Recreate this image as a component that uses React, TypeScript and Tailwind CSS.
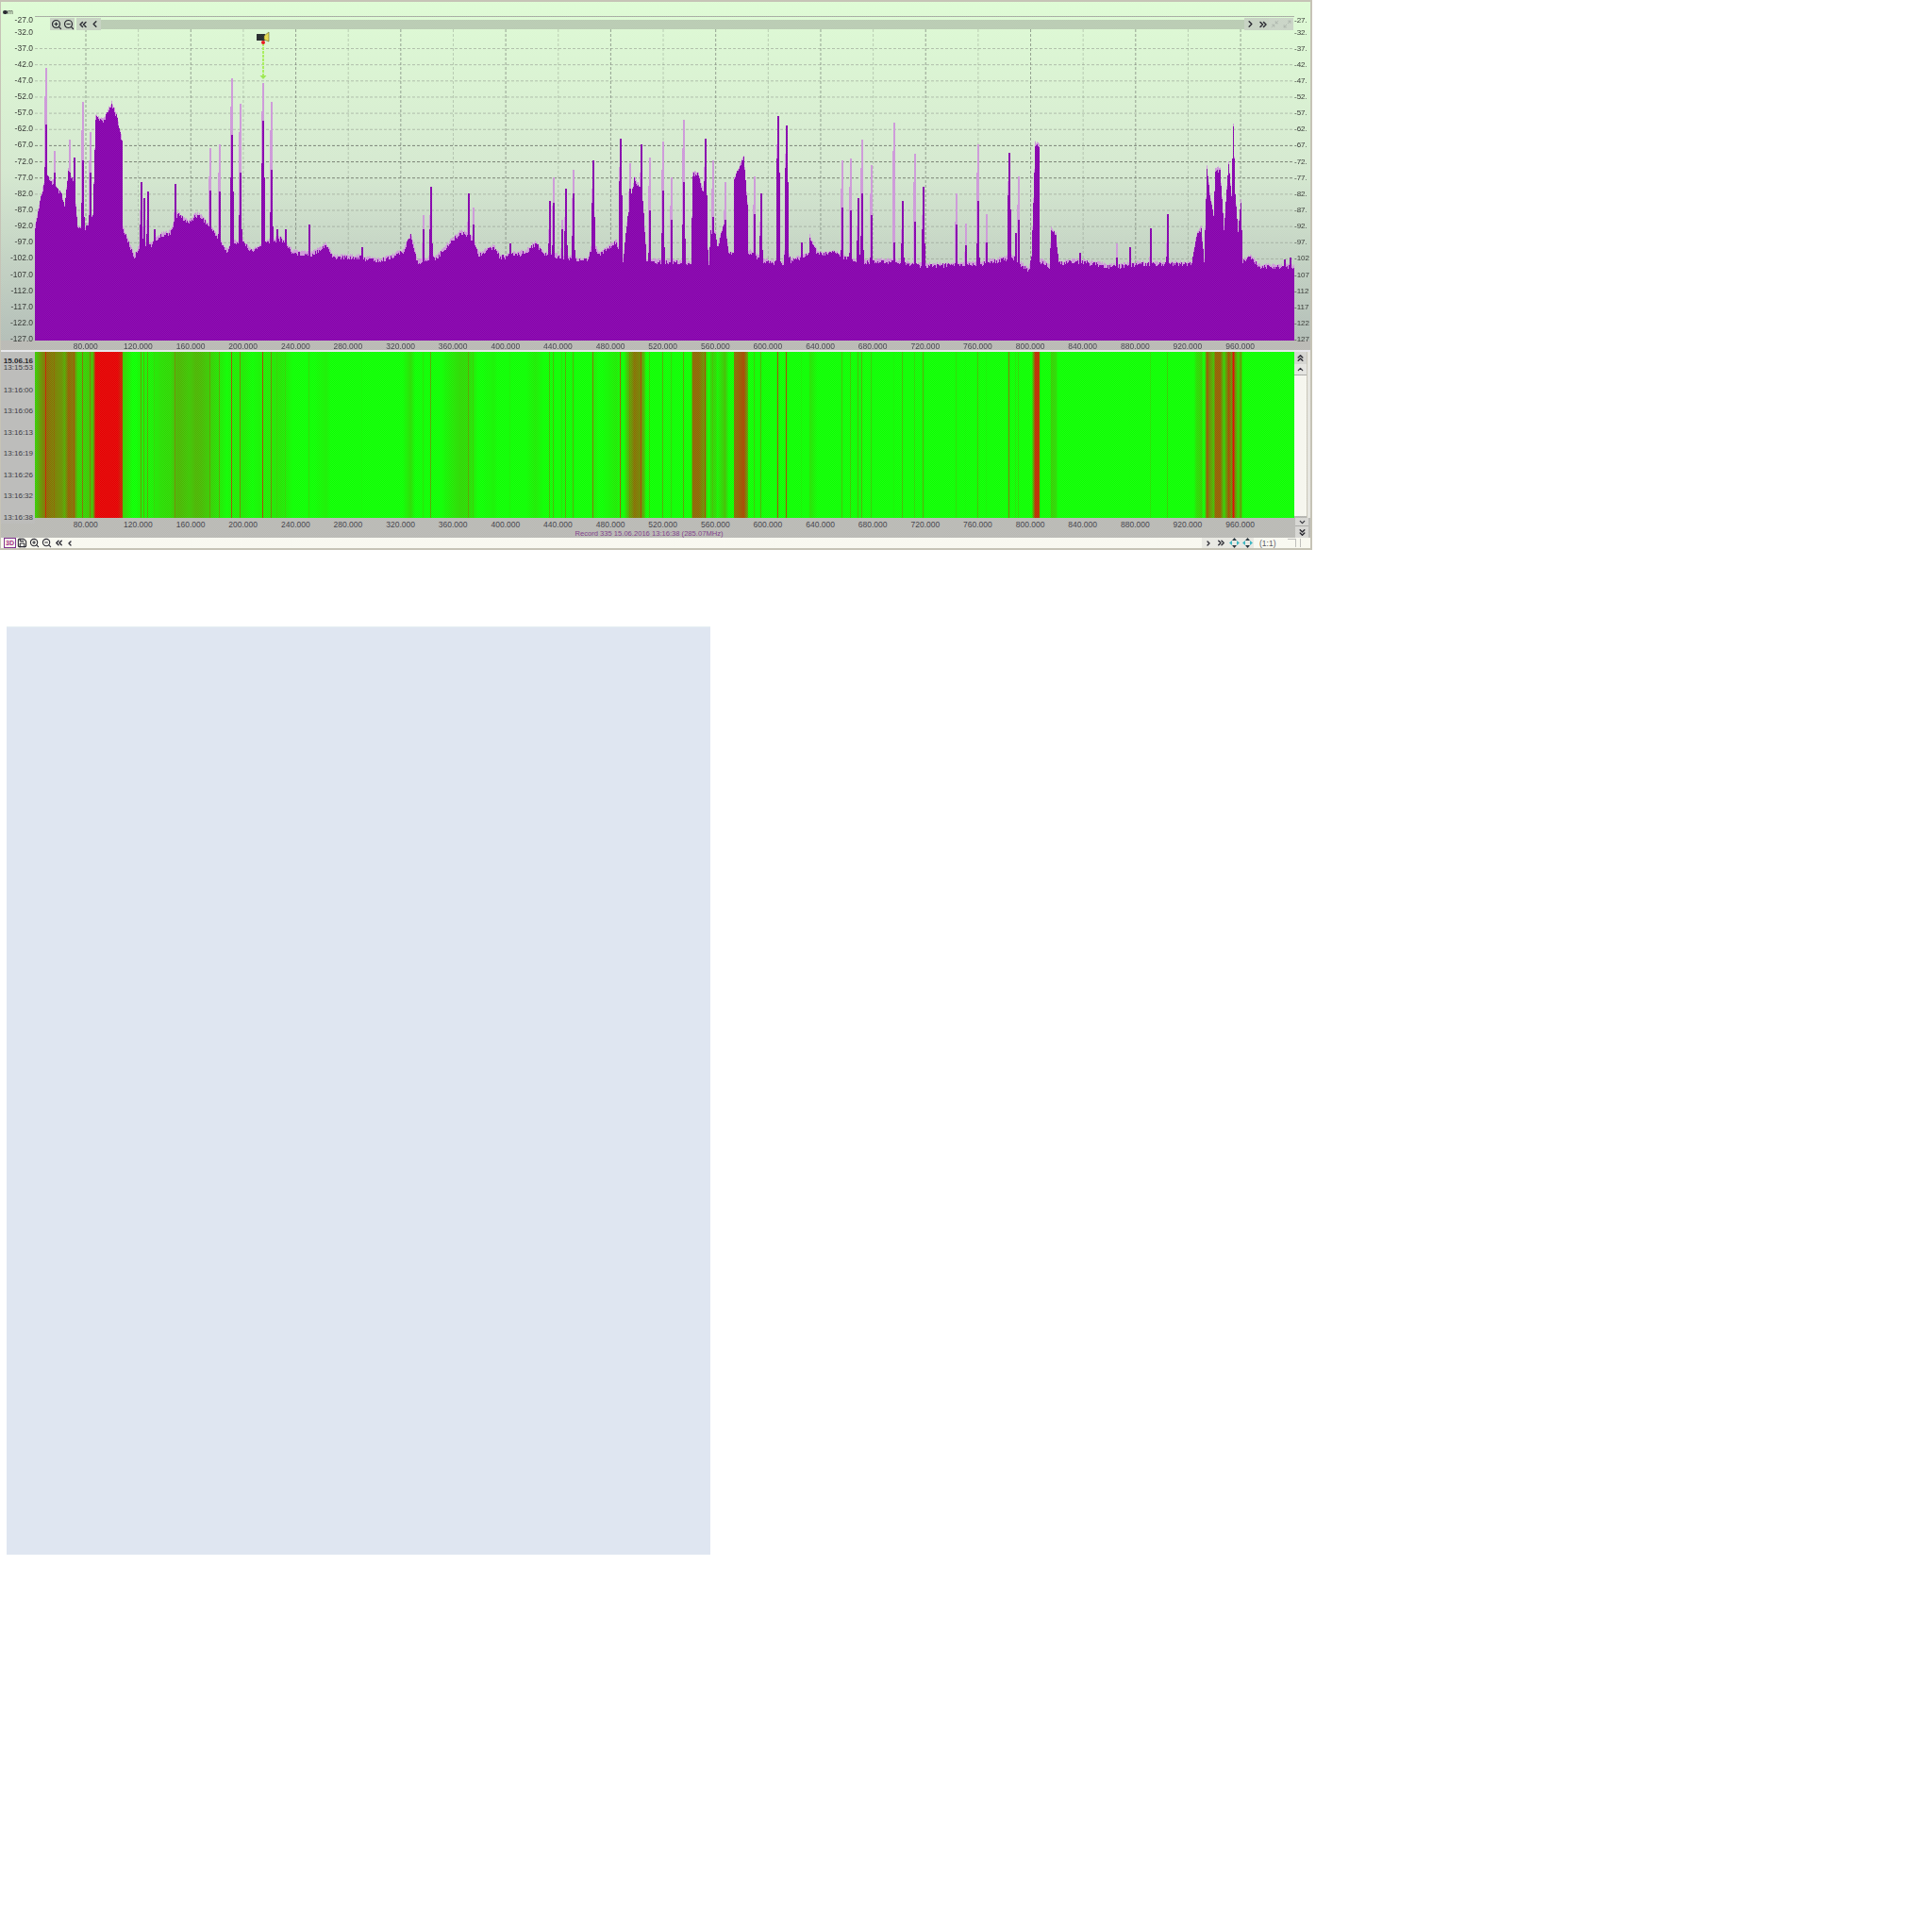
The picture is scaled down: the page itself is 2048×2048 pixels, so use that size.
import React from 'react';
import { ZoomIn, ZoomOut, ChevronsLeft, ChevronLeft, ChevronRight, ChevronsRight, ChevronsUp, ChevronUp, ChevronDown, ChevronsDown, Save, Maximize2, Minimize2 } from 'lucide-react';

// envelope of the noise floor, page coordinates [x, y]
const ENVELOPE: number[][] = [
  [37, 240], [42, 213], [47, 193], [50, 187], [57, 197], [65, 207], [68, 220], [72, 183], [78, 193], [82, 243], [90, 242], [98, 230],
  [101, 125], [110, 128], [118, 110], [123, 123], [129, 150], [130, 243], [142, 273], [147, 262], [160, 260], [170, 250], [180, 247],
  [188, 227], [200, 237], [207, 228], [213, 230], [227, 247], [240, 267], [247, 258], [257, 257], [267, 267], [280, 258], [297, 253],
  [310, 268], [330, 270], [345, 260], [353, 273], [380, 273], [403, 277], [427, 267], [435, 250], [442, 278], [463, 273], [477, 257],
  [488, 247], [498, 250], [507, 270], [523, 262], [530, 273], [557, 268], [567, 258], [577, 270], [623, 277], [628, 257], [635, 270],
  [653, 257], [660, 277], [665, 230], [672, 190], [678, 200], [682, 227], [685, 277], [713, 278], [732, 280], [734, 185], [740, 185],
  [746, 208], [751, 280], [753, 245], [758, 247], [760, 263], [768, 235], [772, 268], [777, 270], [778, 190], [788, 168], [792, 217],
  [793, 267], [810, 277], [830, 280], [832, 258], [838, 277], [857, 270], [858, 252], [867, 270], [883, 268], [907, 278], [943, 277],
  [977, 282], [1040, 280], [1073, 273], [1090, 287], [1093, 273], [1097, 153], [1101, 155], [1102, 277], [1112, 282], [1114, 242],
  [1119, 250], [1122, 280], [1140, 277], [1180, 283], [1207, 280], [1263, 280], [1268, 250], [1273, 242], [1276, 277], [1279, 177],
  [1282, 207], [1286, 230], [1288, 180], [1293, 180], [1297, 243], [1302, 173], [1305, 207], [1307, 132], [1309, 207], [1312, 247],
  [1315, 213], [1317, 277], [1325, 273], [1335, 283], [1372, 283],
];

// narrow carriers [x, solid top, pale top]
const SPIKES: number[][] = [
  [48, 132, 72], [57, 183, 160], [73, 183, 148], [78, 167, 167], [87, 170, 108], [95, 183, 140], [149, 193, 193], [152, 210, 210],
  [156, 203, 203], [163, 243, 243], [185, 195, 195], [222, 202, 157], [232, 203, 153], [245, 143, 83], [254, 183, 110], [278, 128, 88],
  [287, 180, 108], [293, 243, 243], [302, 243, 243], [327, 238, 238], [383, 262, 262], [448, 243, 228], [456, 198, 198], [496, 205, 205],
  [501, 238, 220], [540, 258, 258], [582, 213, 213], [586, 215, 188], [595, 243, 233], [599, 200, 200], [607, 205, 180], [628, 170, 170],
  [657, 147, 147], [667, 200, 173], [679, 153, 153], [688, 223, 167], [702, 202, 150], [711, 233, 188], [724, 193, 127], [747, 147, 147],
  [755, 230, 170], [768, 233, 193], [799, 227, 187], [806, 205, 205], [824, 123, 123], [833, 133, 133], [849, 257, 257], [892, 220, 170],
  [901, 223, 168], [909, 210, 210], [913, 205, 148], [923, 228, 175], [947, 257, 130], [956, 213, 213], [969, 235, 163], [978, 198, 198],
  [1013, 238, 205], [1023, 260, 237], [1036, 213, 153], [1045, 257, 227], [1069, 162, 162], [1076, 247, 247], [1079, 233, 187],
  [1144, 268, 268], [1183, 273, 258], [1197, 262, 262], [1219, 242, 242], [1237, 227, 227], [1361, 275, 275], [1367, 273, 273],
];

const X0 = 37;
const X1 = 1372;

function rnd(x: number) {
  const v = Math.sin(x * 12.9898) * 43758.5453;
  return v - Math.floor(v);
}

function buildColumns() {
  const solid: number[] = [];
  const pale: number[] = [];
  const clean: number[] = [];
  let k = 0;
  for (let x = X0; x < X1; x++) {
    while (k < ENVELOPE.length - 2 && ENVELOPE[k + 1][0] <= x) k++;
    const [ax, ay] = ENVELOPE[k];
    const [bx, by] = ENVELOPE[k + 1];
    const y = ay + ((by - ay) * (x - ax)) / (bx - ax);
    clean.push(y);
    solid.push(y + (rnd(x) - 0.5) * 5);
    pale.push(y - 1 - rnd(x + 7) * 3);
  }
  for (const [x, top, hold] of SPIKES) {
    const i = x - X0;
    for (const j of [i, i + 1]) {
      solid[j] = Math.min(solid[j], top);
      pale[j] = Math.min(pale[j], hold);
    }
    // carriers only tint the waterfall, one column wide
    clean[i] = Math.min(clean[i], clean[i] + (top - clean[i]) * 0.72);
    solid[i - 1] = Math.min(solid[i - 1], top + 45);
    solid[i + 2] = Math.min(solid[i + 2], top + 60);
    pale[i - 1] = Math.min(pale[i - 1], hold + 30);
  }
  return { solid, pale, clean };
}

const { solid, pale, clean } = buildColumns();

function stepPath(col: number[]) {
  let d = `M${X0} 361`;
  col.forEach((y, i) => {
    d += `V${y.toFixed(1)}H${X0 + i + 1}`;
  });
  return d + 'V361Z';
}

function heat(y: number) {
  const t = Math.max(0, Math.min(1, (268 - y) / 140));
  const r = Math.round(12 + 216 * t);
  const g = Math.round(255 * (1 - t));
  return `rgb(${r},${g},0)`;
}

const DB = Array.from({ length: 21 }, (_, i) => -27 - i * 5);
const FREQS = Array.from({ length: 23 }, (_, i) => 80 + i * 40);
const TIMES = ['13:16:00', '13:16:06', '13:16:13', '13:16:19', '13:16:26', '13:16:32', '13:16:38'];

const FreqAxis = () => (
  <div className="flex pl-[62px] h-[10px] items-center">
    {FREQS.map((f) => (
      <span key={f} className="w-[55.64px] shrink-0 text-center text-[8.5px] leading-[10px] text-[#3e3e48]">
        {f}.000
      </span>
    ))}
  </div>
);

const ToolBtn = ({ children, faded }: { children: React.ReactNode; faded?: boolean }) => (
  <div className={`w-[13px] h-[13px] flex items-center justify-center ${faded ? 'bg-[#c9d4c6] text-[#a5aea5]' : 'bg-[#c6d2c2] text-[#23232b]'}`}>
    {children}
  </div>
);

const FitIcon = () => (
  <svg width="11" height="11" viewBox="0 0 11 11">
    <path d="M5.500 0l2.500 3h-5zM5.500 11l2.500-3h-5z" fill="#23323a" />
    <path d="M0 5.500l3-2.500v5zM11 5.500l-3-2.500v5z" fill="#35b4c0" />
  </svg>
);

const Spectrum = () => (
  <svg className="block w-[1335px] h-[359px] shrink-0" viewBox="37 2 1335 359">
    {Array.from({ length: 20 }, (_, i) => (
      <line key={i} x1={37} x2={1372} y1={51.5 + i * 17.15} y2={51.5 + i * 17.15} stroke={i > 5 && i < 9 ? '#6e7468' : '#8b9186'} strokeOpacity={i > 5 && i < 9 ? 0.9 : 0.55} strokeDasharray="3 2" />
    ))}
    {FREQS.map((f, i) => (
      <line key={f} x1={91 + i * 55.64} x2={91 + i * 55.64} y1={31} y2={361} stroke="#727a70" strokeOpacity={i % 2 ? 0.35 : 0.7} strokeDasharray="3 2" />
    ))}
    <path d={stepPath(pale)} fill="#cd98d8" />
    <path d={stepPath(solid)} fill="#8600ac" shapeRendering="crispEdges" />
    {/* marker */}
    <line x1={279} x2={279} y1={46} y2={82} stroke="#a6ee5a" strokeWidth={2} strokeDasharray="3 1" />
    <path d="M275.500 80h7l-3.500 4z" fill="#9ae84e" />
    <rect x={272} y={36} width={9} height={7} fill="#23282a" />
    <path d="M280 38l5-4v10l-5-2z" fill="#e4d84a" stroke="#5b5a20" strokeWidth={0.6} />
    <circle cx={279} cy={45} r={2} fill="#e8141c" />
  </svg>
);

const Waterfall = () => (
  <svg className="block w-[1335px] h-[176px] shrink-0" viewBox="37 0 1335 176" shapeRendering="crispEdges">
    {clean.map((y, i) => (
      <rect key={i} x={X0 + i} y={0} width={1} height={176} fill={heat(y)} />
    ))}
  </svg>
);

export default function App() {
  return (
    <div className="min-h-screen bg-white [font-family:'Liberation_Sans',Arial,sans-serif]">
      <div className="relative w-[1391px] h-[583px] flex flex-col border-t-2 border-l border-r-2 border-b-2 border-[#c6c3b6] blur-[0.35px]">
        {/* top panel with level axis */}
        <div className="relative flex h-[359px] bg-linear-to-b from-[#defbd4] via-[#d4e8cf] to-[#b2bdb6]">
          <div className="w-[36px] shrink-0 pt-[10.5px] pr-[2px] text-right text-[8.5px] leading-[17.15px] text-[#30332f]">
            {DB.map((v, i) => (
              <div key={v} className={i === 0 ? 'h-[17.15px] -mb-[4.15px]' : 'h-[17.15px]'}>
                {v}.0
              </div>
            ))}
          </div>
          <Spectrum />
          <div className="w-[17px] shrink-0 pt-[10.5px] text-[8px] leading-[17.15px] text-[#30332f]">
            {DB.map((v, i) => (
              <div key={v} className={i === 0 ? 'h-[17.15px] -mb-[4.15px] whitespace-nowrap' : 'h-[17.15px] whitespace-nowrap'}>
                {v > -100 ? `${v}.` : v}
              </div>
            ))}
          </div>
          {/* unit mark */}
          <div className="absolute left-[2px] top-[7px] flex items-center text-[7px] leading-[8px] text-[#2c2c2c]">
            <span className="w-[5px] h-[4px] bg-[#23232b] rounded-sm" />m
          </div>
          {/* frame and zoom bar over the plot */}
          <div className="absolute left-[36px] top-[15px] w-[1335px] h-[1px] bg-[#a6aca2]" />
          <div className="absolute left-[52px] top-[17px] flex items-center h-[13px]">
            <ToolBtn><ZoomIn size={12} strokeWidth={2.4} /></ToolBtn>
            <ToolBtn><ZoomOut size={12} strokeWidth={2.4} /></ToolBtn>
            <div className="w-[2px]" />
            <ToolBtn><ChevronsLeft size={12} strokeWidth={3} /></ToolBtn>
            <ToolBtn><ChevronLeft size={11} strokeWidth={3} /></ToolBtn>
            <div className="w-[1212px] h-[10px] bg-[#b9cbb2]" />
            <ToolBtn><ChevronRight size={11} strokeWidth={3} /></ToolBtn>
            <ToolBtn><ChevronsRight size={12} strokeWidth={3} /></ToolBtn>
            <ToolBtn faded><Minimize2 size={9} /></ToolBtn>
            <ToolBtn faded><Maximize2 size={9} /></ToolBtn>
          </div>
        </div>

        {/* frequency axis under spectrum */}
        <div className="bg-[#b9b9b4] h-[10px] pt-[1px]">
          <FreqAxis />
        </div>
        <div className="h-[2px] bg-[#e6e6ea]" />

        {/* waterfall row */}
        <div className="flex h-[176px]">
          <div className="relative z-10 w-[36px] shrink-0 h-[182px] bg-[#bdbdbb] text-right pr-[2px] text-[8px] leading-[9px] text-[#3c3c44]">
            <div className="pt-[5px] font-bold text-[#26262c]">15.06.16</div>
            <div className="-mt-[2px] h-[17.5px]">13:15:53</div>
            <div className="flex flex-col">
              {TIMES.map((t) => (
                <div key={t} className="h-[22.5px] leading-[22.5px]">{t}</div>
              ))}
            </div>
          </div>
          <Waterfall />
          <div className="w-[14px] shrink-0 flex flex-col bg-[#f6f6ee] border-r border-[#c6c3b6] text-[#23232b]">
            <div className="h-[13px] flex items-center justify-center bg-[#d4d4d0]"><ChevronsUp size={11} strokeWidth={3.2} /></div>
            <div className="h-[12px] flex items-center justify-center bg-[#e4e4e0] border-b border-[#a8a8a4]"><ChevronUp size={9} strokeWidth={3} /></div>
            <div className="flex-1" />
            <div className="h-[2px] bg-[#b5b5b0]" />
          </div>
          <div className="w-[3px] shrink-0 bg-[#e6e6e0]" />
        </div>

        {/* lower axis with record line */}
        <div className="relative h-[21px] bg-[#b9b9b4]">
          <div className="pt-[2px]">
            <FreqAxis />
          </div>
          <div className="text-center w-[1374px] text-[7.600px] leading-[9px] text-[#7c3a88]">
            Record 335 15.06.2016 13:16:38 (285.07MHz)
          </div>
          <div className="absolute left-[1372px] top-0 w-[14px] flex flex-col text-[#23232b] bg-[#d6d6d2]">
            <div className="h-[8px] flex items-center justify-center"><ChevronDown size={9} strokeWidth={3} /></div>
            <div className="h-[13px] flex items-center justify-center border-t border-[#a8a8a4]"><ChevronsDown size={11} strokeWidth={3.2} /></div>
          </div>
        </div>

        {/* bottom toolbar */}
        <div className="relative flex items-center h-[11px] bg-[#f8f8f0] text-[#23232b] overflow-visible">
          <div className="flex items-center w-[1273px] pl-[3px]">
            <span className="w-[13px] h-[11px] border border-[#7c2c8c] text-[7px] leading-[9px] text-center text-[#a01c7c] font-bold">3D</span>
            <span className="w-[13px] flex justify-center"><Save size={11} strokeWidth={2.4} /></span>
            <span className="w-[13px] flex justify-center"><ZoomIn size={11} strokeWidth={2.4} /></span>
            <span className="w-[13px] flex justify-center"><ZoomOut size={11} strokeWidth={2.4} /></span>
            <span className="w-[13px] flex justify-center"><ChevronsLeft size={11} strokeWidth={3} /></span>
            <span className="w-[10px] flex justify-center"><ChevronLeft size={8} strokeWidth={4} /></span>
          </div>
          <div className="flex items-center h-[11px] gap-[1px] bg-[#e8e8e2] pl-[1px]">
            <span className="w-[12px] flex justify-center"><ChevronRight size={8} strokeWidth={4} /></span>
            <span className="w-[13px] flex justify-center"><ChevronsRight size={11} strokeWidth={3} /></span>
            <span className="w-[13px] flex justify-center"><FitIcon /></span>
            <span className="w-[13px] flex justify-center"><FitIcon /></span>
          </div>
          <span className="pl-[6px] text-[8.5px] leading-[10px] text-[#54545c]">(1:1)</span>
          <span className="ml-[13px] w-[9px] h-[9px] border-r border-t border-[#bcbcb8]" />
          <span className="ml-[4px] w-[9px] h-[9px] border-l border-[#bcbcb8]" />
        </div>

        {/* print dither over the whole window */}
        <div className="absolute inset-0 pointer-events-none bg-[repeating-conic-gradient(#ffffff14_0_25%,#00000000_0_50%)] bg-[length:2px_2px]" />
      </div>

      <div className="ml-[7px] mt-[81px] w-[746px] h-[984px] bg-[#dfe6f1] border-t border-[#e5eef2]" />
    </div>
  );
}
